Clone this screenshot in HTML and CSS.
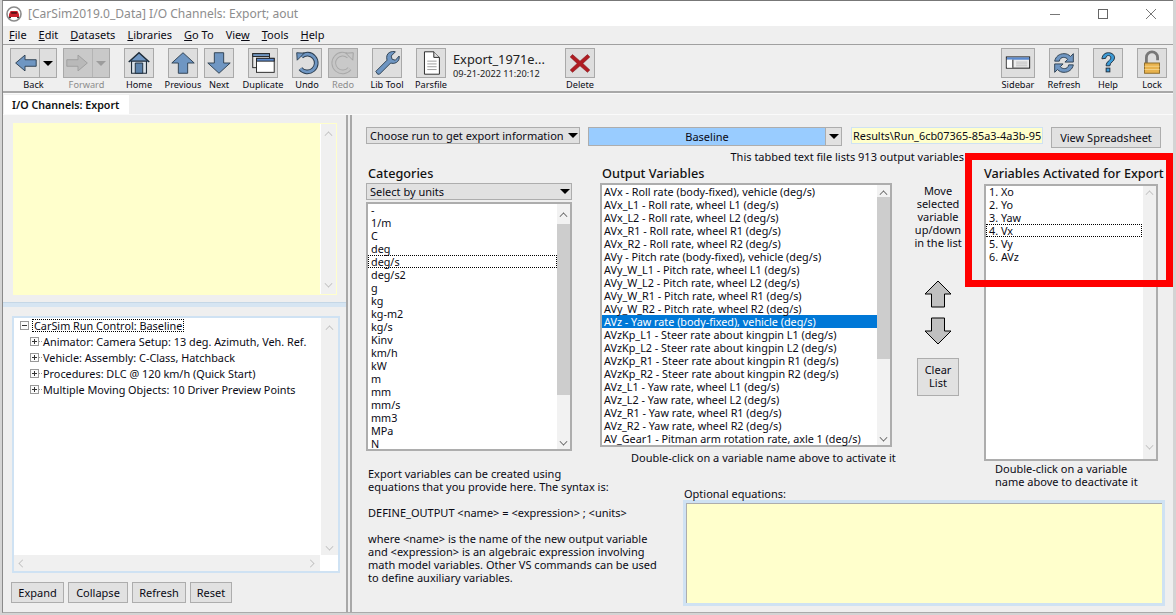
FILE: index.html
```html
<!DOCTYPE html>
<html lang="en">
<head>
<meta charset="utf-8">
<title>I/O Channels: Export</title>
<link rel="stylesheet" href="styles.css">
</head>
<body>
<div class="window">
  <header class="titlebar">
    <svg class="logo" viewBox="0 0 16 16" width="16" height="16"><circle cx="8" cy="8" r="7" fill="#fff" stroke="#8a8a8a" stroke-width="1.6"/><path d="M3 11V8.2L4.6 5h6.8L13 8.2V11z" fill="#c8202c"/><rect x="5.2" y="6" width="5.6" height="1.8" fill="#5a1016"/><rect x="3" y="11" width="2" height="1.2" fill="#333"/><rect x="11" y="11" width="2" height="1.2" fill="#333"/></svg>
    <span class="title-text">[CarSim2019.0_Data] I/O Channels: Export; aout</span>
    <div class="winbtns">
      <svg viewBox="0 0 12 12" width="12" height="12"><path d="M1 6.5h10" stroke="#777" fill="none"/></svg>
      <svg viewBox="0 0 12 12" width="12" height="12"><rect x="1.5" y="1.5" width="9" height="9" stroke="#666" fill="none"/></svg>
      <svg viewBox="0 0 12 12" width="12" height="12"><path d="M1 1l10 10M11 1L1 11" stroke="#777" fill="none"/></svg>
    </div>
  </header>
  <nav class="menubar">
    <span><u>F</u>ile</span><span><u>E</u>dit</span><span><u>D</u>atasets</span><span><u>L</u>ibraries</span><span><u>G</u>o To</span><span>Vie<u>w</u></span><span><u>T</u>ools</span><span><u>H</u>elp</span>
  </nav>
  <div class="toolbar">
    <div class="tool tool-split" id="back">
      <div class="split"><span class="ic"><svg viewBox="0 0 30 30" width="30" height="28"><path d="M5 15L15 6.5v5h12v7H15v5z" fill="#6f96c2" stroke="#2c3e50"/></svg></span><span class="drop"><i class="tri"></i></span></div>
      <span class="lbl">Back</span>
    </div>
    <div class="tool tool-split off">
      <div class="split"><span class="ic"><svg viewBox="0 0 30 30" width="30" height="28"><path d="M25 15L15 6.5v5H3v7h12v5z" fill="#b9b9b9" stroke="#9e9e9e"/></svg></span><span class="drop"><i class="tri"></i></span></div>
      <span class="lbl">Forward</span>
    </div>
    <div class="tool w30 m14">
      <span class="box"><svg viewBox="0 0 30 30" width="28" height="28"><path d="M4 14L15 4l11 10" fill="#6f96c2" stroke="#1f2d3a" stroke-width="1.6"/><path d="M7 13h16v13H7z" fill="#d9e2ea" stroke="#1f2d3a" stroke-width="1.2"/><path d="M11 15h8v11h-8z" fill="#5d84ad" stroke="#1f2d3a"/></svg></span>
      <span class="lbl">Home</span>
    </div>
    <div class="tool w30 m14">
      <span class="box"><svg viewBox="0 0 30 30" width="28" height="28"><path d="M15 4L27 15h-7v11h-10V15H3z" fill="#6f96c2" stroke="#2c3e50"/></svg></span>
      <span class="lbl">Previous</span>
    </div>
    <div class="tool w30 m6">
      <span class="box"><svg viewBox="0 0 30 30" width="28" height="28"><path d="M15 26L27 15h-7V4h-10v11H3z" fill="#6f96c2" stroke="#2c3e50"/></svg></span>
      <span class="lbl">Next</span>
    </div>
    <div class="tool w30 m14">
      <span class="box"><svg viewBox="0 0 30 30" width="28" height="28"><rect x="4" y="5" width="18" height="15" fill="#e9e9e9" stroke="#222"/><rect x="4" y="5" width="18" height="3" fill="#6f96c2" stroke="#222"/><rect x="8" y="10" width="19" height="15" fill="#fff" stroke="#222"/><rect x="8" y="10" width="19" height="3" fill="#5a8ad0" stroke="#222"/></svg></span>
      <span class="lbl">Duplicate</span>
    </div>
    <div class="tool w30 m14">
      <span class="box"><svg viewBox="0 0 30 30" width="28" height="28"><path d="M9 8a9.5 9.5 0 1 1-1 13" fill="none" stroke="#2c3e50" stroke-width="5"/><path d="M9 8a9.5 9.5 0 1 1-1 13" fill="none" stroke="#6f96c2" stroke-width="3"/><path d="M4 4l8 .5-7.5 7.5z" fill="#6f96c2" stroke="#2c3e50"/></svg></span>
      <span class="lbl">Undo</span>
    </div>
    <div class="tool w30 m6 off">
      <span class="box"><svg viewBox="0 0 30 30" width="28" height="28"><path d="M21 8a9.5 9.5 0 1 0 1 13" fill="none" stroke="#a8a8a8" stroke-width="5"/><path d="M21 8a9.5 9.5 0 1 0 1 13" fill="none" stroke="#c6c6c6" stroke-width="3"/><path d="M26 4l-8 .5 7.500 7.500z" fill="#c6c6c6" stroke="#a0a0a0"/></svg></span>
      <span class="lbl">Redo</span>
    </div>
    <div class="tool w30 m14">
      <span class="box"><svg viewBox="0 0 30 30" width="28" height="28"><path d="M5 27l-2-3 12-12c-1-4 0-7 3-8.500 2-1 4-1 6-.5l-4.500 4.500 1 3.500 3.500 1L28 7.500c.5 3-.5 5.500-3 7-2.500 1.300-4.500 1-6 .5L7 27z" fill="#6f96c2" stroke="#2c3e50"/></svg></span>
      <span class="lbl">Lib Tool</span>
    </div>
    <div class="tool w30 m14">
      <span class="box"><svg viewBox="0 0 30 30" width="28" height="28"><path d="M8 3h10l6 6v18H8z" fill="#fff" stroke="#222"/><path d="M18 3v6h6" fill="#ddd" stroke="#222"/><path d="M11 13h10M11 16h10M11 19h10M11 22h10" stroke="#999"/></svg></span>
      <span class="lbl">Parsfile</span>
    </div>
    <div class="dataset">
      <div class="ds-name">Export_1971e...</div>
      <div class="ds-date">09-21-2022 11:20:12</div>
    </div>
    <div class="tool w30 m-del">
      <span class="box"><svg viewBox="0 0 30 30" width="28" height="28"><path d="M7 6l8 7 8-7 2.500 2.500-7.500 7 7.500 7L23 25l-8-7-8 7-2.500-2.500 7.500-7-7.500-7z" fill="#b01c22" stroke="#7d1014" stroke-width=".6"/></svg></span>
      <span class="lbl">Delete</span>
    </div>
    <div class="tool w34 m-side">
      <span class="box"><svg viewBox="0 0 34 30" width="32" height="28"><rect x="4.500" y="8.500" width="25" height="12" fill="#ececec" stroke="#111"/><rect x="5" y="9" width="24" height="2.500" fill="#5a8ad0"/><rect x="5" y="11.500" width="6" height="8.500" fill="#fff"/><path d="M11.500 11.500V20" stroke="#111"/><path d="M15 14h12M15 16h12M15 18h12" stroke="#bbb"/></svg></span>
      <span class="lbl">Sidebar</span>
    </div>
    <div class="tool w30 m14">
      <span class="box"><svg viewBox="0 0 30 30" width="28" height="28"><path d="M5 13c1-5 5-8 10-8 3 0 5 1 7 3l3-3v9h-9l3-3c-1-1.500-3-2-4.500-2-2 0-4 1-4.500 4z" fill="#6f96c2" stroke="#2c3e50"/><path d="M25 17c-1 5-5 8-10 8-3 0-5-1-7-3l-3 3v-9h9l-3 3c1 1.500 3 2 4.500 2 2 0 4-1 4.500-4z" fill="#6f96c2" stroke="#2c3e50"/></svg></span>
      <span class="lbl">Refresh</span>
    </div>
    <div class="tool w30 m14">
      <span class="box"><svg viewBox="0 0 30 30" width="28" height="28"><path d="M8.500 10.500C9 6 12 4 15.500 4c4 0 6.500 2.500 6.500 5.500 0 4-5 4.500-5 8.500h-4c0-5 5-5.500 5-8.500 0-1.500-1-2.500-2.500-2.500s-2.500 1-3 3z" fill="#3d9bd6" stroke="#1d2b3a"/><rect x="13" y="20.500" width="4" height="4" fill="#3d9bd6" stroke="#1d2b3a"/></svg></span>
      <span class="lbl">Help</span>
    </div>
    <div class="tool w30 m14">
      <span class="box"><svg viewBox="0 0 30 30" width="28" height="28"><path d="M9 15V9a6 6 0 0 1 12 0v3" fill="none" stroke="#777" stroke-width="3"/><rect x="7" y="15" width="16" height="11" fill="#e8b24c" stroke="#8a6a2a"/><path d="M7 18.500h16M7 22h16" stroke="#f4d48a"/></svg></span>
      <span class="lbl">Lock</span>
    </div>
  </div>
  <div class="tabstrip"><span class="tab">I/O Channels: Export</span></div>
  <main class="main">
    <aside class="left">
      <div class="notes">
        <div class="notes-fill"></div>
        <div class="sb sb-off sb-notes"><span class="up"></span><span class="down"></span></div>
      </div>
      <div class="splitter"></div>
      <div class="tree">
        <div class="tree-body">
          <ul class="tree-list">
            <li class="root"><i class="exp minus"></i><span class="focus">CarSim Run Control: Baseline</span></li>
            <li><i class="exp plus"></i><span>Animator: Camera Setup: 13 deg. Azimuth, Veh. Ref.</span></li>
            <li><i class="exp plus"></i><span>Vehicle: Assembly: C-Class, Hatchback</span></li>
            <li><i class="exp plus"></i><span>Procedures: DLC @ 120 km/h (Quick Start)</span></li>
            <li><i class="exp plus"></i><span>Multiple Moving Objects: 10 Driver Preview Points</span></li>
          </ul>
          <div class="sb sb-off sb-tree"><span class="up"></span><span class="down"></span></div>
        </div>
        <div class="hbar"><span class="lft"></span><span class="rgt"></span><span class="corner"></span></div>
      </div>
      <div class="left-btns">
        <button class="btn b-exp">Expand</button>
        <button class="btn b-col">Collapse</button>
        <button class="btn b-ref">Refresh</button>
        <button class="btn b-res">Reset</button>
      </div>
    </aside>
    <section class="right">
      <div class="toprow">
        <div class="combo c-run"><span>Choose run to get export information</span><i class="tri"></i></div>
        <div class="combo-blue"><span class="val">Baseline</span><span class="arrow"><i class="tri"></i></span></div>
        <div class="path">Results\Run_6cb07365-85a3-4a3b-95</div>
        <button class="btn b-view">View Spreadsheet</button>
      </div>
      <div class="note">This tabbed text file lists 913 output variables</div>
      <div class="panels">
        <div class="p-cat">
          <h2>Categories</h2>
          <div class="combo c-units"><span>Select by units</span><i class="tri"></i></div>
          <div class="listbox lb-cat">
            <ul>
              <li>-</li><li>1/m</li><li>C</li><li>deg</li><li class="focus-row">deg/s</li><li>deg/s2</li><li>g</li><li>kg</li><li>kg-m2</li><li>kg/s</li><li>Kinv</li><li>km/h</li><li>kW</li><li>m</li><li>mm</li><li>mm/s</li><li>mm3</li><li>MPa</li><li>N</li>
            </ul>
            <div class="sb sb-cat"><span class="up"></span><span class="thumb"></span><span class="down"></span></div>
          </div>
        </div>
        <div class="p-out">
          <h2>Output Variables</h2>
          <div class="listbox lb-out">
            <ul>
              <li>AVx - Roll rate (body-fixed), vehicle (deg/s)</li>
              <li>AVx_L1 - Roll rate, wheel L1 (deg/s)</li>
              <li>AVx_L2 - Roll rate, wheel L2 (deg/s)</li>
              <li>AVx_R1 - Roll rate, wheel R1 (deg/s)</li>
              <li>AVx_R2 - Roll rate, wheel R2 (deg/s)</li>
              <li>AVy - Pitch rate (body-fixed), vehicle (deg/s)</li>
              <li>AVy_W_L1 - Pitch rate, wheel L1 (deg/s)</li>
              <li>AVy_W_L2 - Pitch rate, wheel L2 (deg/s)</li>
              <li>AVy_W_R1 - Pitch rate, wheel R1 (deg/s)</li>
              <li>AVy_W_R2 - Pitch rate, wheel R2 (deg/s)</li>
              <li class="sel">AVz - Yaw rate (body-fixed), vehicle (deg/s)</li>
              <li>AVzKp_L1 - Steer rate about kingpin L1 (deg/s)</li>
              <li>AVzKp_L2 - Steer rate about kingpin L2 (deg/s)</li>
              <li>AVzKp_R1 - Steer rate about kingpin R1 (deg/s)</li>
              <li>AVzKp_R2 - Steer rate about kingpin R2 (deg/s)</li>
              <li>AVz_L1 - Yaw rate, wheel L1 (deg/s)</li>
              <li>AVz_L2 - Yaw rate, wheel L2 (deg/s)</li>
              <li>AVz_R1 - Yaw rate, wheel R1 (deg/s)</li>
              <li>AVz_R2 - Yaw rate, wheel R2 (deg/s)</li>
              <li>AV_Gear1 - Pitman arm rotation rate, axle 1 (deg/s)</li>
            </ul>
            <div class="sb sb-out"><span class="up"></span><span class="thumb"></span><span class="down"></span></div>
          </div>
          <p class="caption">Double-click on a variable name above to activate it</p>
        </div>
        <div class="p-move">
          <p class="move-text">Move<br>selected<br>variable<br>up/down<br>in the list</p>
          <svg class="arrow-btn" viewBox="0 0 28 28" width="28" height="28"><path d="M14 1L27 14h-6.500v13h-13V14H1z" fill="#c0c0c0" stroke="#000" stroke-width="1"/></svg>
          <svg class="arrow-btn a2" viewBox="0 0 28 28" width="28" height="28"><path d="M14 27L27 14h-6.500V1h-13v13H1z" fill="#c0c0c0" stroke="#000" stroke-width="1"/></svg>
          <button class="btn b-clear">Clear<br>List</button>
        </div>
        <div class="p-act">
          <h2>Variables Activated for Export</h2>
          <div class="listbox lb-act">
            <ul>
              <li>1. Xo</li><li>2. Yo</li><li>3. Yaw</li><li class="focus-row">4. Vx</li><li>5. Vy</li><li>6. AVz</li>
            </ul>
            <div class="sb sb-off sb-act"><span class="up"></span><span class="down"></span></div>
          </div>
          <p class="caption-left">Double-click on a variable<br>name above to deactivate it</p>
        </div>
        <div class="p-para">
          <p>Export variables can be created using<br>equations that you provide here. The syntax is:</p>
          <p>DEFINE_OUTPUT &lt;name&gt; = &lt;expression&gt; ; &lt;units&gt;</p>
          <p>where &lt;name&gt; is the name of the new output variable<br>and &lt;expression&gt; is an algebraic expression involving<br>math model variables. Other VS commands can be used<br>to define auxiliary variables.</p>
        </div>
        <div class="p-eq">
          <label class="eq-label">Optional equations:</label>
          <div class="eq-box"></div>
        </div>
      </div>
      <div class="highlight"></div>
    </section>
  </main>
</div>
</body>
</html>
```
FILE: styles.css
```css
* { box-sizing: border-box; }
html, body { margin: 0; padding: 0; }
body { width: 1176px; height: 615px; overflow: hidden; background: #d4d4d4; font-family: "Noto Sans", "Open Sans", sans-serif; font-size: 11px; line-height: 13px; color: #0a0a14; }
ul { list-style: none; margin: 0; padding: 0; }
p, h2 { margin: 0; }

.window { width: 1171px; height: 613px; margin-left: 2px; background: #efefef; border-top: 1px solid #777; border-left: 1px solid #8a8a8a; border-bottom: 1px solid #aaa; display: flex; flex-direction: column; overflow: hidden; }

.titlebar { height: 25px; flex: none; background: #fff; display: flex; align-items: center; padding-left: 3px; }
.logo { margin-right: 6px; flex: none; }
.title-text { font-size: 12.050px; color: #8d8d8d; }
.winbtns { margin-left: auto; display: flex; gap: 36px; padding-right: 16px; }

.menubar { height: 18px; flex: none; display: flex; align-items: center; padding: 0 0 2px 6px; gap: 12px; font-size: 11px; background: #efefef; }

.toolbar { height: 49px; flex: none; border-top: 1px solid #a0a0a0; border-bottom: 2px solid #a8a8a8; display: flex; padding: 3px 0 0 7px; align-items: flex-start; }
.tool { display: flex; flex-direction: column; align-items: center; flex: none; }
.tool.w30 { width: 30px; }
.tool.w34 { width: 34px; }
.m14 { margin-left: 14px; }
.m6 { margin-left: 6px; }
.m-del { margin-left: 0; }
.m-side { margin-left: 406px; }
.tool-split { width: 47px; margin-right: 0; }
.tool-split.off { margin-left: 6px; }
.box, .split { height: 30px; background: #dedede; border: 1px solid #a9a9a9; display: flex; align-items: center; justify-content: center; }
.box { width: 30px; }
.tool.w34 .box { width: 34px; }
.split { width: 47px; justify-content: flex-start; }
.ic { width: 29px; display: flex; justify-content: center; border-right: 1px solid #a9a9a9; height: 28px; }
.drop { flex: 1; display: flex; align-items: center; justify-content: center; }
.tri { display: block; width: 0; height: 0; border-left: 5px solid transparent; border-right: 5px solid transparent; border-top: 5px solid #000; }
.lbl { font-size: 9.200px; line-height: 12px; margin-top: 1px; white-space: nowrap; }
.off .box, .off .split { background: #c9c9c9; }
.off .ic { border-right-color: #b4b4b4; }
.off .tri { border-top-color: #9c9c9c; }
.off .lbl { color: #8c8c8c; }
.dataset { margin-left: 7px; width: 112px; flex: none; padding-top: 3px; }
.ds-name { font-size: 12.800px; line-height: 17px; color: #222; }
.ds-date { font-size: 9.200px; line-height: 11px; color: #222; }

.tabstrip { height: 21px; flex: none; display: flex; align-items: flex-end; border-top: 1px solid #fafafa; padding-left: 1px; background: #efefef; }
.tab { height: 19px; width: 125px; background: #fff; padding: 4px 0 0 8px; font-weight: 600; font-size: 10.700px; line-height: 13px; color: #111; }

.main { flex: 1; display: flex; min-height: 0; border-top: 1px solid #fafafa; }

.left { width: 345px; flex: none; padding: 8px 8px 0 0; border-right: 2px solid #a8a8a8; display: flex; flex-direction: column; }
.notes { margin-left: 10px; width: 324px; height: 172px; display: flex; border: 1px solid #ffffcc; }
.notes-fill { flex: 1; background: #ffffcc; }
.sb { display: flex; flex-direction: column; align-items: center; flex: none; position: relative; }
.sb-off { background: #f0f0f0; border-left: 1px solid #fff; justify-content: space-between; }
.sb-notes { width: 16px; padding: 5px 0; }
.up, .down { display: block; width: 7px; height: 7px; flex: none; border: solid #555; }
.up { border-width: 1.500px 0 0 1.500px; transform: translateY(3px) rotate(45deg) scale(.8); }
.down { border-width: 0 1.500px 1.500px 0; transform: translateY(-2px) rotate(45deg) scale(.8); }
.sb-off .up, .sb-off .down { border-color: #bcbcbc; }
.splitter { height: 5px; margin: 7px -8px 0 0; background: #d6e5f2; border-top: 1px solid #c5d7e6; flex: none; }
.tree { margin: 9px 0 0 9px; width: 328px; height: 257px; border: 2px solid #cfe2f3; background: #fff; display: flex; flex-direction: column; }
.tree-body { flex: 1; display: flex; min-height: 0; }
.tree-list { flex: 1; margin-top: -1px; padding: 0 0 0 6px; font-size: 10.850px; }
.tree-list li { height: 16px; display: flex; align-items: center; padding-left: 10px; white-space: nowrap; color: #0a0a14; background: repeating-linear-gradient(90deg, #999 0 1px, transparent 1px 2px) 19px 50% / 4px 1px no-repeat; }
.tree-list li.root { padding-left: 0; background: none; }
.exp { display: block; width: 9px; height: 9px; border: 1px solid #999; background: #fbfbfb; position: relative; margin-right: 4px; flex: none; }
.root .exp { margin-right: 3px; }
.exp::before { content: ""; position: absolute; left: 1px; top: 3px; width: 5px; height: 1px; background: #333; }
.plus::after { content: ""; position: absolute; left: 3px; top: 1px; width: 1px; height: 5px; background: #333; }
.focus { outline: 1px dotted #000; outline-offset: -1px; padding: 0 2px; height: 13px; }
.sb-tree { width: 18px; padding: 5px 0 3px; }
.hbar { height: 16px; flex: none; background: #f0f0f0; display: flex; align-items: center; padding-left: 5px; }
.lft, .rgt { display: block; width: 7px; height: 7px; border: solid #bcbcbc; transform: rotate(45deg) scale(.8); }
.lft { border-width: 0 0 1.500px 1.500px; }
.rgt { border-width: 1.500px 1.500px 0 0; margin-left: auto; margin-right: 6px; }
.corner { width: 18px; height: 16px; background: #fff; }
.left-btns { display: flex; margin: 9px 0 0 8px; }
.btn { font: inherit; color: inherit; background: #e1e1e1; border: 1px solid #adadad; padding: 0; height: 21px; text-align: center; flex: none; }
.b-exp { width: 53px; }
.b-col { width: 60px; margin-left: 4px; }
.b-ref { width: 54px; margin-left: 4px; }
.b-res { width: 42px; margin-left: 4px; }

.right { flex: 1; position: relative; margin-left: 2px; border-left: 2px solid #a8a8a8; padding: 12px 0 0 14px; min-width: 0; }
.toprow { display: flex; align-items: flex-start; height: 22px; }
.combo { background: #e1e1e1; border: 1px solid #adadad; display: flex; align-items: center; justify-content: space-between; padding: 0 1px 0 3px; height: 17px; }
.c-run { width: 214px; }
.combo-blue { width: 254px; height: 19px; margin-left: 8px; border: 1px solid #adadad; background: #e1e1e1; display: flex; }
.val { flex: 1; background: #99ccff; text-align: center; line-height: 18px; }
.arrow { width: 16px; display: flex; align-items: center; justify-content: center; border-left: 1px solid #adadad; }
.path { width: 192px; height: 17px; margin-left: 9px; background: #ffffcc; border: 1px solid #cfe2f3; padding: 1px 1px 0; white-space: nowrap; overflow: hidden; line-height: 14px; font-size: 10.900px; }
.b-view { width: 110px; margin-left: 8px; height: 21px; }
.note { height: 15px; width: 598px; text-align: right; margin-top: 1px; line-height: 14px; }

.panels { display: grid; grid-template-columns: 234px 84px 208px 92px 179px; grid-template-rows: 300px 25px 115px; }
.panels h2 { font-size: 12.700px; font-weight: 500; line-height: 16px; white-space: nowrap; color: #111; }
.p-cat { grid-column: 1; grid-row: 1; }
.p-cat h2 { padding-left: 2px; height: 18px; margin-top: 0; }
.c-units { width: 206px; margin-bottom: 2px; }
.listbox { background: #fff; border: 2px solid #adadad; display: flex; position: relative; font-size: 10.800px; }
.listbox ul { flex: 1; min-width: 0; }
.listbox li { height: 13px; padding-left: 3px; white-space: nowrap; }
.lb-cat { width: 206px; height: 249px; }
.lb-cat ul { margin-top: -1px; }
.focus-row { outline: 1px dotted #000; outline-offset: -1px; }
.sb-cat { width: 13px; background: #f2f2f2; }
.sb-out { width: 13px; background: #f2f2f2; }
.sb .thumb { display: block; width: 13px; background: #cdcdcd; flex: none; }
.sb-cat .thumb { height: 171px; margin-top: 7px; }
.sb-cat .up { margin-top: 6px; }
.sb-cat .down { margin-top: auto; margin-bottom: 2px; }
.sb-out .thumb { height: 162px; margin-top: 2px; }
.sb-out .up { margin-top: 3px; }
.sb-out .down { margin-top: auto; margin-bottom: 2px; }
.p-out { grid-column: 2 / 4; grid-row: 1; }
.p-out h2 { height: 18px; padding-left: 2px; }
.lb-out { width: 292px; height: 264px; }
.lb-out li { padding-left: 2px; margin-left: 0; }
.lb-out .sel { background: #0078d7; color: #fff; }
.caption { margin-top: 4px; padding-left: 31px; white-space: nowrap; }
.p-move { grid-column: 4; grid-row: 1; display: flex; flex-direction: column; align-items: center; padding-top: 19px; width: 92px; }
.move-text { text-align: center; }
.arrow-btn { margin-top: 31px; flex: none; }
.arrow-btn.a2 { margin-top: 9px; }
.b-clear { width: 42px; height: 38px; margin-top: 13px; padding-bottom: 2px; line-height: 13px; }
.p-act { grid-column: 5; grid-row: 1 / 3; }
.p-act h2 { height: 19px; }
.lb-act { width: 174px; height: 277px; }
.lb-act ul { margin-top: -1px; }
.lb-act .focus-row { margin-right: 0; }
.sb-act { width: 14px; padding: 2px 0 8px; }
.caption-left { margin-top: 1px; padding-left: 11px; }
.p-para { grid-column: 1 / 3; grid-row: 2 / 4; padding: 2px 0 0 2px; }
.p-para p { margin-bottom: 13px; white-space: nowrap; }
.p-eq { grid-column: 3 / 6; grid-row: 3; }
.eq-label { display: block; margin-top: -3px; height: 13px; line-height: 13px; }
.eq-box { width: 482px; height: 106px; background: #ffffcc; border: 3px solid #cfe2f3; margin-left: -1px; box-shadow: inset 1px 1px 0 #adadad; }

.highlight { position: absolute; left: 613px; top: 38px; width: 208px; height: 134px; border: 7px solid #ff0000; pointer-events: none; }
```
